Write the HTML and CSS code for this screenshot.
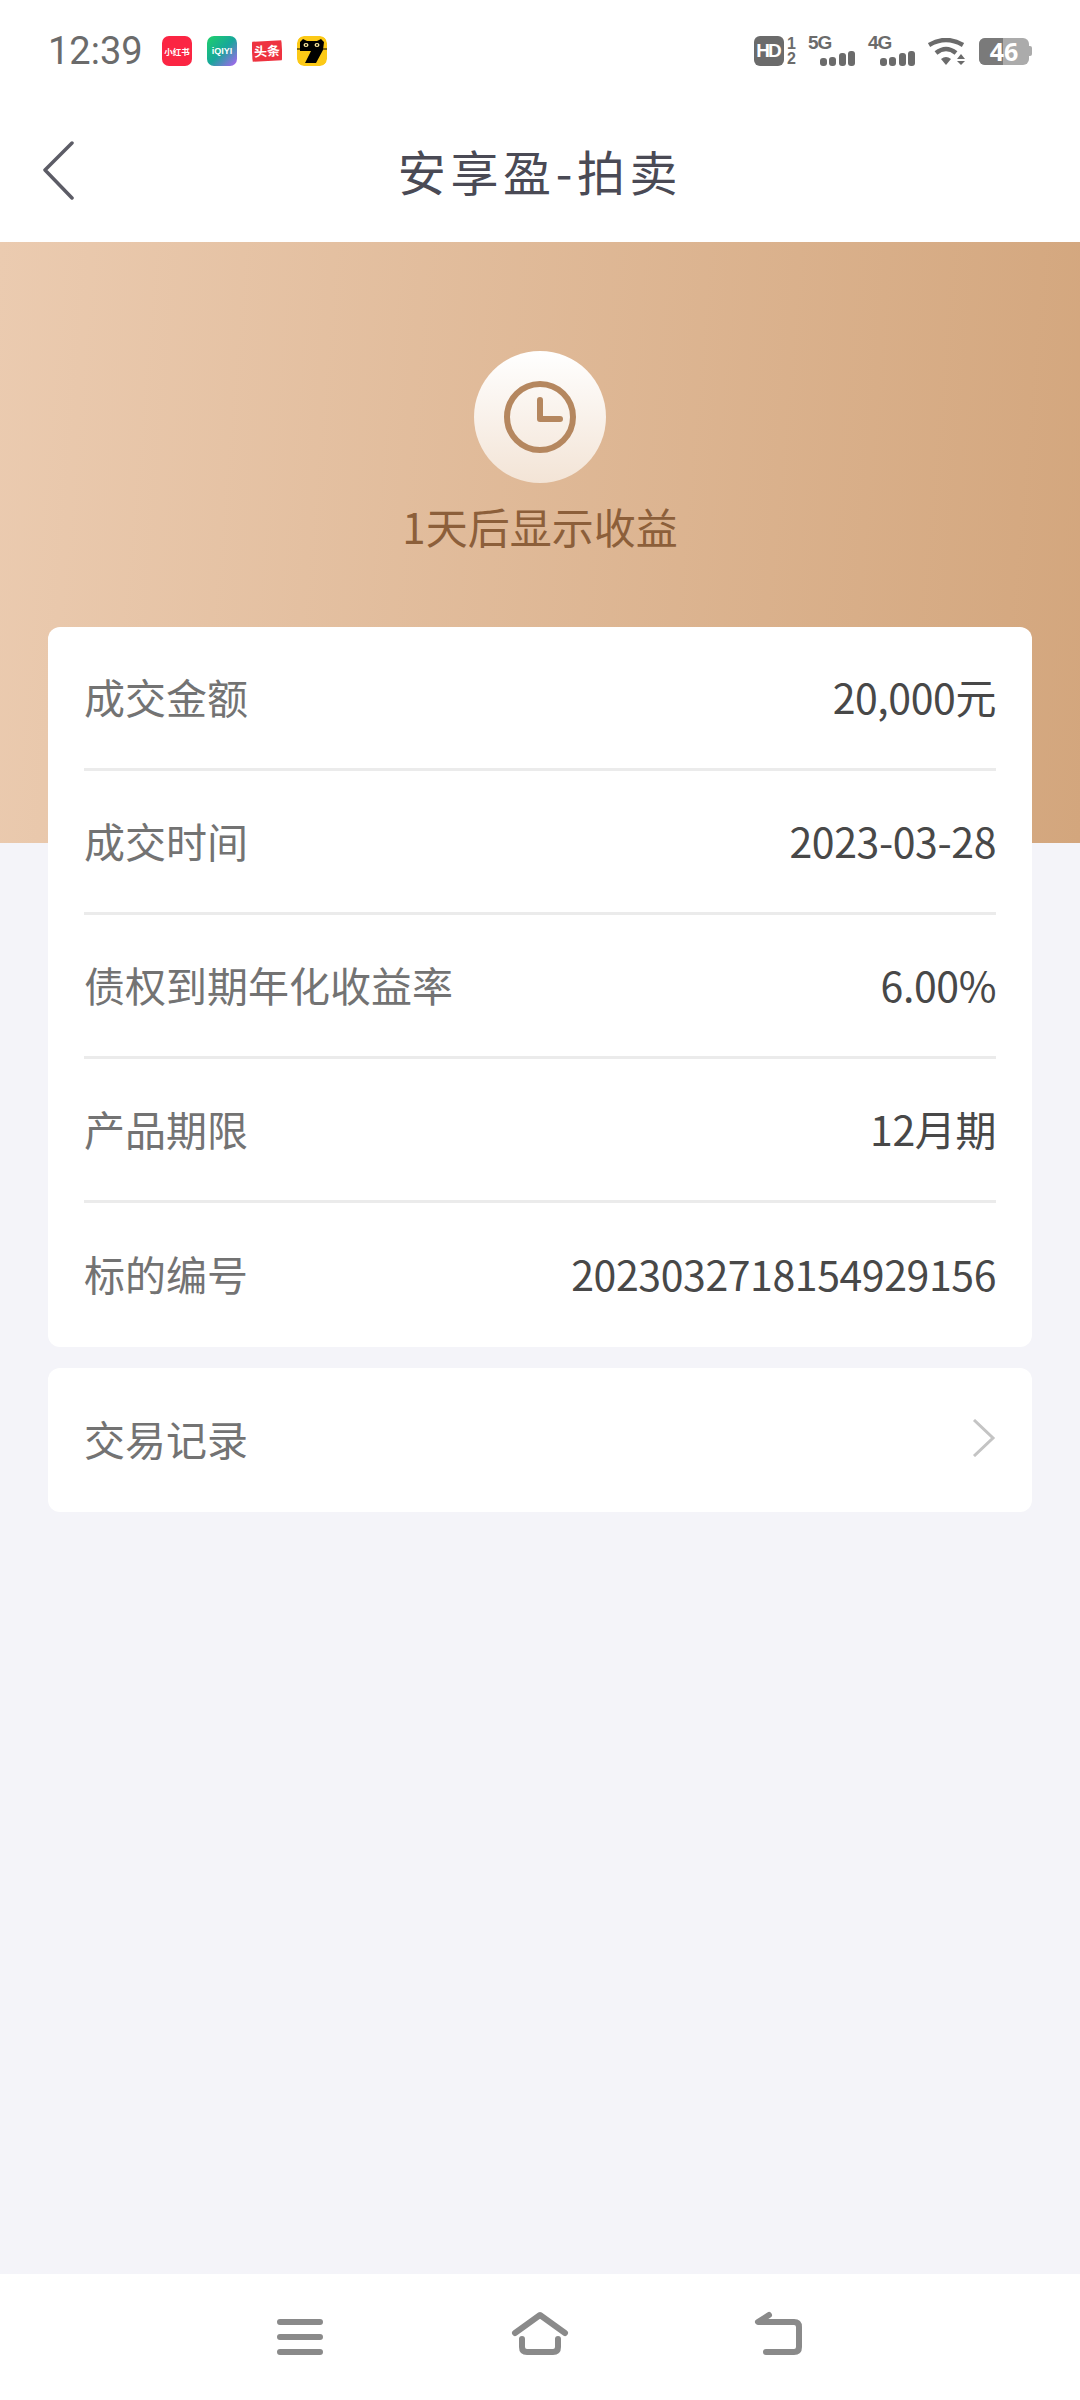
FILE: index.html
```html
<!DOCTYPE html>
<html lang="zh">
<head>
<meta charset="utf-8">
<title>安享盈-拍卖</title>
<link rel="stylesheet" href="styles.css">
</head>
<body>
<div class="page">
  <div class="status">
    <span class="time">12:39</span>
    <div class="apps">
      <span class="app app-red"><span class="app-t">小红书</span></span>
      <span class="app app-iq"><span class="app-t app-t-iq">iQIYI</span></span>
      <span class="app app-tt"><span class="app-tt-band">头条</span></span>
      <svg class="app" viewBox="0 0 30 30"><rect width="30" height="30" rx="7" fill="#fcc916"/><path d="M3 15 L3 6 L6 3 L10 5 L20 5 L24 3 L27 6 L26 14 L19 27 L8 27 L14 15 Z" fill="#000"/><ellipse cx="9" cy="9" rx="2.500" ry="2" fill="#fce9a0"/><ellipse cx="20" cy="9" rx="2.500" ry="2" fill="#fce9a0"/><circle cx="9" cy="9" r="1" fill="#000"/><circle cx="20" cy="9" r="1" fill="#000"/><path d="M0 13h4M26 13h4" stroke="#000" stroke-width="1"/></svg>
    </div>
    <div class="sys">
      <span class="hd">HD</span>
      <span class="sim"><span>1</span><span>2</span></span>
      <span class="net net-first"><span class="net-t">5G</span><span class="bars"><i class="b1"></i><i class="b2"></i><i class="b3"></i><i class="b4"></i></span></span>
      <span class="net"><span class="net-t">4G</span><span class="bars"><i class="b1"></i><i class="b2"></i><i class="b3"></i><i class="b4"></i></span></span>
      <svg class="wifi" viewBox="0 0 38 27"><path d="M1 7 Q18 -3 35 7"/><path d="M8 15 Q18 7 28 15"/><path class="fill" d="M13 21 Q18 17 23 21 L18 27 Z"/><path class="fill" d="M29 21 L33 16 L37 21 Z M29 23 L37 23 L33 27 Z"/></svg>
      <span class="batt"><span class="batt-level"></span><span class="batt-t">46</span></span><span class="batt-tip"></span>
    </div>
  </div>
  <header class="nav">
    <svg class="back" viewBox="0 0 33 60"><path d="M30 3 L3 30 L30 58"/></svg>
    <h1 class="title">安享盈-拍卖</h1>
  </header>
  <section class="banner">
    <div class="clock-disc">
      <svg class="clock" viewBox="0 0 72 72"><circle cx="36" cy="36" r="33"/><path d="M36 19 V38 H56"/></svg>
    </div>
    <p class="banner-text">1天后显示收益</p>
  </section>
  <main class="content">
    <div class="card">
      <div class="row"><span class="label">成交金额</span><span class="value">20,000元</span></div>
      <div class="row"><span class="label">成交时间</span><span class="value">2023-03-28</span></div>
      <div class="row"><span class="label">债权到期年化收益率</span><span class="value">6.00%</span></div>
      <div class="row"><span class="label">产品期限</span><span class="value">12月期</span></div>
      <div class="row"><span class="label">标的编号</span><span class="value">2023032718154929156</span></div>
    </div>
    <div class="card">
      <div class="row"><span class="label">交易记录</span><svg class="chev" viewBox="0 0 24 38"><path d="M2 1 L21 19 L2 37"/></svg></div>
    </div>
  </main>
  <footer class="bottom">
    <svg class="nb" viewBox="0 0 60 60"><path d="M10 15H50M10 30H50M10 45H50"/></svg>
    <svg class="nb" viewBox="0 0 60 60"><path d="M5 26 L30 8 L55 26"/><path d="M12 32 V40 Q12 45 17 45 H43 Q48 45 48 40 V32"/></svg>
    <svg class="nb" viewBox="0 0 60 60"><path d="M19 8 L8 15 H44 Q49 15 49 20 V40 Q49 45 44 45 H16"/></svg>
  </footer>
</div>
</body>
</html>
```
FILE: styles.css
```css
* { box-sizing: border-box; }
html, body { margin: 0; padding: 0; }
body {
  font-family: "Noto Sans CJK SC", "Noto Sans", sans-serif;
  background: #f4f4f9;
}
.page { width: 1080px; height: 2400px; display: flex; flex-direction: column; }

.status { height: 102px; background: #fff; display: flex; align-items: center; padding: 0 48px; }
.time { font-family: Roboto, sans-serif; font-size: 38px; color: #6b6b6b; width: 114px; }
.apps { display: flex; gap: 15px; }
.app { display: flex; width: 30px; height: 30px; border-radius: 7px; overflow: hidden; align-items: center; justify-content: center; }
.app-red { background: #fb2543; }
.app-iq { background: linear-gradient(135deg, #1fd16a 0%, #17a79a 50%, #b060f5 100%); }
.app-tt { background: #fff; }
.app-t { color: #fff; font-size: 8.5px; line-height: 1; white-space: nowrap; font-weight: 700; }
.app-t-iq { font-family: "Liberation Sans", sans-serif; font-size: 9px; font-weight: 700; }
.app-tt-band { background: #ee3340; color: #fff; font-size: 13px; line-height: 20px; font-weight: 700; width: 30px; text-align: center; transform: rotate(-3deg); }

.sys { margin-left: auto; display: flex; align-items: center; color: #6b6b6b; height: 30px; }
.hd { width: 30px; height: 30px; background: #6b6b6b; border-radius: 6px; color: #fff; font: 700 19px/30px "Liberation Sans", sans-serif; text-align: center; letter-spacing: -2px; text-indent: -2px; }
.sim { display: flex; flex-direction: column; font: 700 16px/15px "Liberation Sans", sans-serif; margin-left: 3px; width: 11px; }
.net { position: relative; width: 47px; height: 30px; margin-left: 13px; display: block; }
.net-first { margin-left: 10px; }
.net-t { position: absolute; left: 0; top: -2px; font: 700 19px/18px "Liberation Sans", sans-serif; letter-spacing: -1px; }
.bars { position: absolute; right: 0; bottom: 0; display: flex; align-items: flex-end; gap: 2.3px; }
.bars i { display: block; width: 7px; background: #6b6b6b; border-radius: 3px; }
.b1 { height: 8px; } .b2 { height: 9px; } .b3 { height: 13px; } .b4 { height: 15px; }
.wifi { width: 38px; height: 27px; margin-left: 13px; fill: none; stroke: #6b6b6b; stroke-width: 4.5; }
.wifi .fill { fill: #6b6b6b; stroke: none; }
.batt { position: relative; width: 50px; height: 27px; margin-left: 13px; background: #ababab; border-radius: 6px; display: block; }
.batt-level { position: absolute; left: 0; top: 0; bottom: 0; width: 24px; background: #7a7a7a; border-radius: 6px 0 0 6px; }
.batt-t { position: absolute; inset: 0; color: #fff; font: 700 25px/27px "Open Sans", sans-serif; text-align: center; }
.batt-tip { width: 3px; height: 10px; background: #ababab; border-radius: 0 2px 2px 0; }

.nav { height: 140px; background: #fff; display: grid; grid-template-columns: 1fr auto 1fr; align-items: center; padding: 0 42px 4px; }
.back { width: 33px; height: 60px; fill: none; stroke: #5c5c66; stroke-width: 3.5; stroke-linecap: round; stroke-linejoin: round; }
.title { margin: 0; font-size: 48px; line-height: 70px; font-weight: 400; color: #4a4a55; letter-spacing: 4.6px; }

.banner { height: 601px; background: linear-gradient(95deg, #ebcbb0 0%, #d3a67d 100%); display: flex; flex-direction: column; align-items: center; padding-top: 109px; flex: none; }
.clock-disc { width: 132px; height: 132px; border-radius: 50%; background: linear-gradient(180deg, #ffffff 0%, #f3e4d6 100%); display: flex; align-items: center; justify-content: center; }
.clock { width: 72px; height: 72px; fill: none; stroke: #b5875f; stroke-width: 6; stroke-linecap: round; stroke-linejoin: round; }
.banner-text { margin: 12px 0 0; font-size: 42px; line-height: 62px; color: #8c5f3a; }

.content { flex: 1; display: flex; flex-direction: column; gap: 21px; padding: 0 48px; margin-top: -216px; position: relative; }
.card { background: #fff; border-radius: 12px; padding: 0 36px; }
.row { height: 144px; display: flex; align-items: center; justify-content: space-between; border-bottom: 3px solid #ebebeb; padding-bottom: 3px; }
.row:last-child { border-bottom: 0; padding-bottom: 4px; }
.label { font-size: 41px; color: #737373; }
.value { font-size: 41px; color: #484848; letter-spacing: -0.4px; }
.chev { width: 24px; height: 38px; fill: none; stroke: #c4c4c4; stroke-width: 3; }

.bottom { height: 126px; background: #fff; display: flex; align-items: center; justify-content: center; }
.nb { width: 60px; height: 60px; fill: none; stroke: #8a8a8a; stroke-width: 6; stroke-linecap: round; stroke-linejoin: round; margin: 0 90px; }
```
